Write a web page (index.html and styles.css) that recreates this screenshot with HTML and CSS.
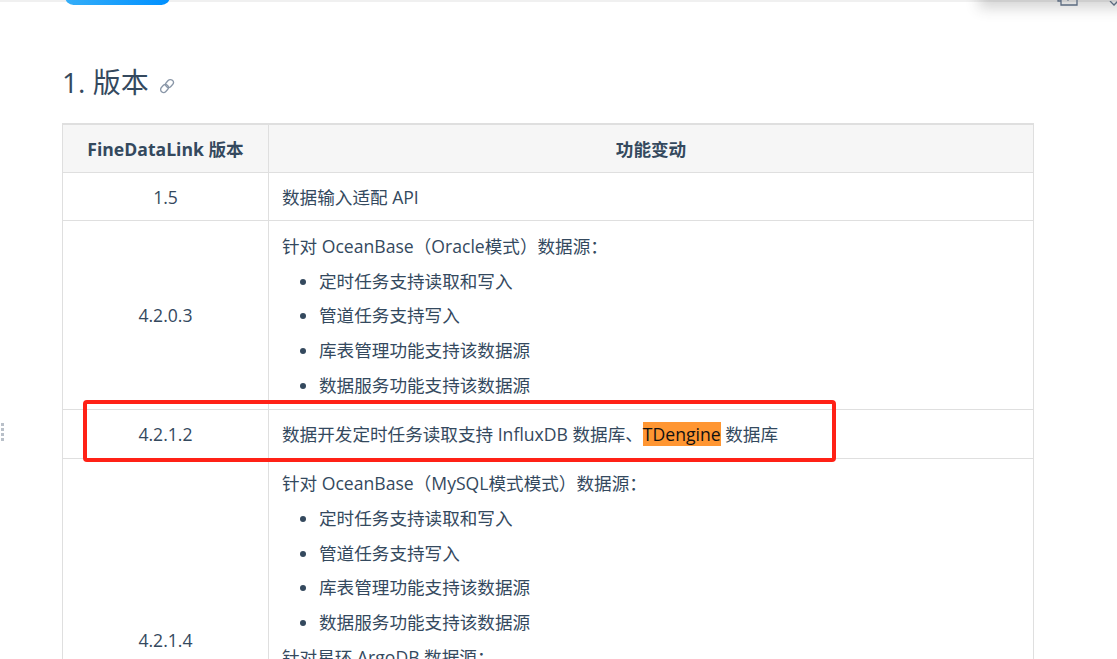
FILE: index.html
```html
<!DOCTYPE html>
<html lang="zh">
<head>
<meta charset="utf-8">
<title>版本</title>
<link rel="stylesheet" href="styles.css">
</head>
<body>
<div class="topline"></div>
<div class="pill"></div>
<div class="popup">
  <svg class="pop-icon copy" width="24" height="12" viewBox="0 0 24 12"><path d="M3 0v4h3M6 0v8h16V0M10 0l3 3 3-3" fill="none" stroke="#5b6b80" stroke-width="1.3"/></svg>
  <svg class="pop-icon chev" width="10" height="7" viewBox="0 0 10 7"><path d="M1 0l4 4 4-4" fill="none" stroke="#5b6b80" stroke-width="1.3"/></svg>
</div>
<div class="handle"><i></i><i></i><i></i><i></i></div>
<main class="content">
  <h1 class="title">1. 版本
    <svg class="anchor" width="16" height="16" viewBox="0 0 16 16"><g fill="none" stroke="#8a97a8" stroke-width="1.3"><rect x="7.5" y="1.2" width="6" height="8.6" rx="3" transform="rotate(42 10.5 5.5)"/><rect x="2.5" y="6.2" width="6" height="8.6" rx="3" transform="rotate(42 5.5 10.5)"/></g></svg>
  </h1>
  <table class="versions">
    <thead>
      <tr><th class="col-a">FineDataLink 版本</th><th>功能变动</th></tr>
    </thead>
    <tbody>
      <tr><td class="ver">1.5</td><td>数据输入适配 API</td></tr>
      <tr>
        <td class="ver">4.2.0.3</td>
        <td>
          <p>针对 OceanBase（Oracle模式）数据源：</p>
          <ul>
            <li>定时任务支持读取和写入</li>
            <li>管道任务支持写入</li>
            <li>库表管理功能支持该数据源</li>
            <li>数据服务功能支持该数据源</li>
          </ul>
        </td>
      </tr>
      <tr>
        <td class="ver">4.2.1.2</td>
        <td>数据开发定时任务读取支持 InfluxDB 数据库、<mark>TDengine</mark> 数据库</td>
      </tr>
      <tr>
        <td class="ver">4.2.1.4</td>
        <td>
          <p>针对 OceanBase（MySQL模式模式）数据源：</p>
          <ul>
            <li>定时任务支持读取和写入</li>
            <li>管道任务支持写入</li>
            <li>库表管理功能支持该数据源</li>
            <li>数据服务功能支持该数据源</li>
          </ul>
          <p class="next">针对星环 ArgoDB 数据源：</p>
          <ul>
            <li>定时任务支持读取和写入</li>
            <li>管道任务支持写入</li>
            <li>库表管理功能支持该数据源</li>
            <li>数据服务功能支持该数据源</li>
          </ul>
        </td>
      </tr>
    </tbody>
  </table>
</main>
<div class="redbox"></div>
</body>
</html>
```
FILE: styles.css
```css
html, body {
  margin: 0;
  height: 659px;
  overflow: hidden;
  background: #fff;
}
body {
  font-family: "Open Sans", "Noto Sans CJK SC", sans-serif;
  color: #34495e;
  font-size: 17.6px;
  position: relative;
}
.topline {
  height: 2px;
  background: #f0f0f0;
}
.pill {
  position: absolute;
  left: 65px;
  top: -12px;
  width: 105px;
  height: 17px;
  border-radius: 9px;
  background: linear-gradient(90deg, #35aef8, #0090ff);
}
.popup {
  position: absolute;
  left: 985px;
  top: -20px;
  width: 160px;
  height: 20px;
  background: #fff;
  box-shadow: 0 2px 14px 6px rgba(60, 60, 60, 0.22);
}
.pop-icon { position: absolute; }
.copy { left: 70px; top: 17px; }
.chev { left: 124px; top: 21px; }
.handle {
  position: absolute;
  left: 1px;
  top: 423px;
  display: grid;
  gap: 2px;
}
.handle i {
  display: block;
  width: 3px;
  height: 3px;
  background: #b9c0c9;
}
.content {
  padding: 0 83px 0 62px;
}
.title {
  margin: 0;
  padding-top: 60px;
  height: 61px;
  font-size: 28px;
  font-weight: 400;
  line-height: 40px;
}
.anchor {
  margin-left: 3px;
  vertical-align: -1px;
}
.versions {
  width: 972px;
  border-collapse: collapse;
  border-top: 2px solid #dfdfdf;
  line-height: 28.16px;
}
.versions th, .versions td {
  border: 1px solid #dfdfdf;
  padding: 9.5px 13px;
}
.versions th {
  background: #f6f6f6;
  font-weight: 700;
  text-align: center;
}
.versions .col-a { width: 179px; }
.versions .ver { text-align: center; }
.versions p {
  margin: 0;
}
.versions .next {
  margin-top: 6.6px;
}
.versions td:has(p) {
  padding-top: 10.5px;
  padding-bottom: 10.5px;
}
.versions ul {
  margin: 0;
  padding: 0 0 0 37px;
  list-style: disc;
}
.versions li {
  margin-top: 6.6px;
}
mark {
  background: #ff9632;
  color: #111;
}
.redbox {
  position: absolute;
  left: 83px;
  top: 400px;
  width: 745px;
  height: 54px;
  border: 4px solid #ff2116;
  border-radius: 4px;
}
```
